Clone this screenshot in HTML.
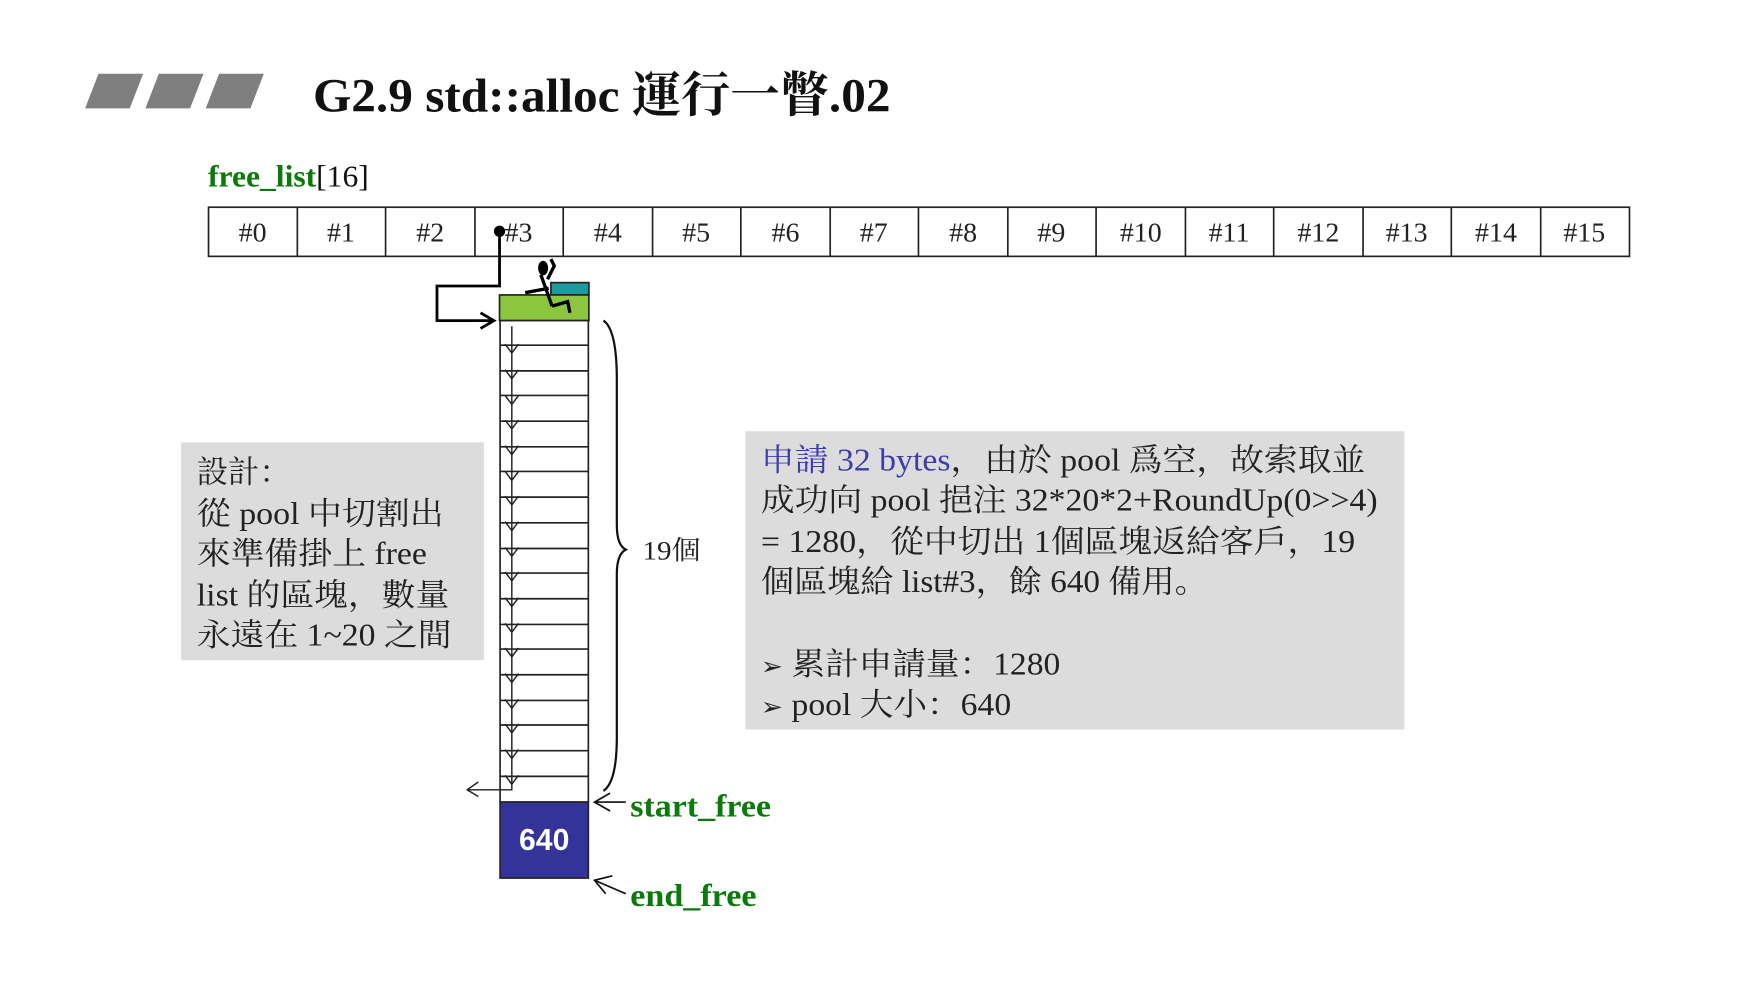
<!DOCTYPE html>
<html><head><meta charset="utf-8"><style>
html,body{margin:0;padding:0;background:#fff;width:1752px;height:992px;overflow:hidden}
svg{display:block}
text{font-family:"Liberation Serif","Noto Serif CJK SC","Noto Sans CJK TC",serif}
</style></head><body>
<svg width="1752" height="992" viewBox="0 0 1568 888" xmlns="http://www.w3.org/2000/svg">
<rect width="1568" height="888" fill="#fff"/>
<g fill="#7f7f7f">
<polygon points="88,66 128,66 116,97 76,97"/>
<polygon points="142,66 182,66 170,97 130,97"/>
<polygon points="196,66 236,66 224,97 184,97"/>
</g>
<text x="280" y="100" font-size="43" font-weight="bold" fill="#111" textLength="517" lengthAdjust="spacingAndGlyphs">G2.9 std::alloc 運行一瞥.02</text>
<text x="186" y="167" font-size="27" fill="#111" textLength="144" lengthAdjust="spacingAndGlyphs"><tspan fill="#0b7a0b" font-weight="bold">free_list</tspan>[16]</text>
<rect x="186.5" y="185.5" width="1272" height="44" fill="none" stroke="#222" stroke-width="1.5"/>
<g stroke="#222" stroke-width="1.5">
<line x1="266" y1="185" x2="266" y2="229"/><line x1="345" y1="185" x2="345" y2="229"/><line x1="425" y1="185" x2="425" y2="229"/><line x1="504" y1="185" x2="504" y2="229"/><line x1="584" y1="185" x2="584" y2="229"/><line x1="663" y1="185" x2="663" y2="229"/><line x1="743" y1="185" x2="743" y2="229"/><line x1="822" y1="185" x2="822" y2="229"/><line x1="902" y1="185" x2="902" y2="229"/><line x1="981" y1="185" x2="981" y2="229"/><line x1="1061" y1="185" x2="1061" y2="229"/><line x1="1140" y1="185" x2="1140" y2="229"/><line x1="1220" y1="185" x2="1220" y2="229"/><line x1="1299" y1="185" x2="1299" y2="229"/><line x1="1379" y1="185" x2="1379" y2="229"/>
</g>
<g font-size="25" fill="#222" text-anchor="middle">
<text x="226" y="216">#0</text><text x="305" y="216">#1</text><text x="385" y="216">#2</text><text x="464" y="216">#3</text><text x="544" y="216">#4</text><text x="623" y="216">#5</text><text x="703" y="216">#6</text><text x="782" y="216">#7</text><text x="862" y="216">#8</text><text x="941" y="216">#9</text><text x="1021" y="216">#10</text><text x="1100" y="216">#11</text><text x="1180" y="216">#12</text><text x="1259" y="216">#13</text><text x="1339" y="216">#14</text><text x="1418" y="216">#15</text>
</g>
<circle cx="447" cy="207" r="5" fill="#000"/>
<polyline points="447,207 447,256 391,256 391,287 441,287" fill="none" stroke="#000" stroke-width="2.5"/>
<polyline points="430,280 442,287 430,294" fill="none" stroke="#000" stroke-width="2.5"/>
<rect x="493" y="253" width="34" height="11" fill="#1d9aa0" stroke="#222" stroke-width="1.5"/>
<rect x="447" y="264" width="80" height="23" fill="#8cc63f" stroke="#222" stroke-width="1.5"/>
<g stroke="#000" stroke-width="3" fill="none"><ellipse cx="486" cy="240" rx="3" ry="5" fill="#000"/><path d="M484 246 L494 274 M491 258 L470 262 M490 250 L496 238 L493 232 M494 274 L508 270 L510 280"/></g>
<rect x="447.5" y="287" width="79" height="431" fill="#fff" stroke="#222" stroke-width="1.5"/>
<g stroke="#222" stroke-width="1.5">
<line x1="447" y1="309" x2="527" y2="309"/><line x1="447" y1="332" x2="527" y2="332"/><line x1="447" y1="354" x2="527" y2="354"/><line x1="447" y1="377" x2="527" y2="377"/><line x1="447" y1="400" x2="527" y2="400"/><line x1="447" y1="422" x2="527" y2="422"/><line x1="447" y1="445" x2="527" y2="445"/><line x1="447" y1="468" x2="527" y2="468"/><line x1="447" y1="491" x2="527" y2="491"/><line x1="447" y1="513" x2="527" y2="513"/><line x1="447" y1="536" x2="527" y2="536"/><line x1="447" y1="559" x2="527" y2="559"/><line x1="447" y1="581" x2="527" y2="581"/><line x1="447" y1="604" x2="527" y2="604"/><line x1="447" y1="627" x2="527" y2="627"/><line x1="447" y1="649" x2="527" y2="649"/><line x1="447" y1="672" x2="527" y2="672"/><line x1="447" y1="695" x2="527" y2="695"/>
</g>
<g stroke="#222" stroke-width="1.3" fill="none">
<path d="M458 292 V316 M452 308 L458 316 L464 308"/>
<path d="M458 315 V339 M452 331 L458 339 L464 331"/>
<path d="M458 338 V362 M452 354 L458 362 L464 354"/>
<path d="M458 360 V384 M452 376 L458 384 L464 376"/>
<path d="M458 383 V407 M452 399 L458 407 L464 399"/>
<path d="M458 406 V430 M452 422 L458 430 L464 422"/>
<path d="M458 428 V452 M452 444 L458 452 L464 444"/>
<path d="M458 451 V475 M452 467 L458 475 L464 467"/>
<path d="M458 474 V498 M452 490 L458 498 L464 490"/>
<path d="M458 496 V520 M452 512 L458 520 L464 512"/>
<path d="M458 519 V543 M452 535 L458 543 L464 535"/>
<path d="M458 542 V566 M452 558 L458 566 L464 558"/>
<path d="M458 564 V588 M452 580 L458 588 L464 580"/>
<path d="M458 587 V611 M452 603 L458 611 L464 603"/>
<path d="M458 610 V634 M452 626 L458 634 L464 626"/>
<path d="M458 632 V656 M452 648 L458 656 L464 648"/>
<path d="M458 655 V679 M452 671 L458 679 L464 671"/>
<path d="M458 678 V702 M452 694 L458 702 L464 694"/>
<path d="M458 702 V707 H418 M428 700 L418 707 L428 713"/>
</g>
<path d="M540 287 Q552 295 552 340 L552 470 Q552 488 560 492 Q552 496 552 514 L552 660 Q552 700 540 708" fill="none" stroke="#111" stroke-width="2"/>
<text x="575" y="501" font-size="24" fill="#222" textLength="52" lengthAdjust="spacingAndGlyphs">19個</text>
<rect x="447.5" y="718" width="79" height="68" fill="#333399" stroke="#222" stroke-width="1.5"/>
<text x="487" y="761" font-size="27" font-weight="bold" fill="#fff" text-anchor="middle" style="font-family:'Liberation Sans',sans-serif">640</text>
<g stroke="#111" stroke-width="1.5" fill="none">
<path d="M532 718 H560 M546 710 L532 718 L546 726"/>
<path d="M532 788 L560 800 M548 784 L532 788 L542 800"/>
</g>
<text x="564" y="731" font-size="28" font-weight="bold" fill="#0b7a0b" textLength="126" lengthAdjust="spacingAndGlyphs">start_free</text>
<text x="564" y="811" font-size="28" font-weight="bold" fill="#0b7a0b" textLength="113" lengthAdjust="spacingAndGlyphs">end_free</text>
<rect x="162" y="396" width="271" height="195" fill="#dcdcdc"/>
<g font-size="28" fill="#222">
<text x="176" y="432">設計：</text>
<text x="176" y="469" textLength="221" lengthAdjust="spacingAndGlyphs">從 pool 中切割出</text>
<text x="176" y="505" textLength="206" lengthAdjust="spacingAndGlyphs">來準備掛上 free</text>
<text x="176" y="542" textLength="226" lengthAdjust="spacingAndGlyphs">list 的區塊，數量</text>
<text x="176" y="578" textLength="228" lengthAdjust="spacingAndGlyphs">永遠在 1~20 之間</text>
</g>
<rect x="667" y="386" width="590" height="267" fill="#dcdcdc"/>
<g font-size="28" fill="#222">
<text x="681" y="421" textLength="541" lengthAdjust="spacingAndGlyphs"><tspan fill="#3d3daa">申請 32 bytes</tspan>，由於 pool 爲空，故索取並</text>
<text x="681" y="457" textLength="552" lengthAdjust="spacingAndGlyphs">成功向 pool 挹注 32*20*2+RoundUp(0&gt;&gt;4)</text>
<text x="681" y="494" textLength="532" lengthAdjust="spacingAndGlyphs">= 1280，從中切出 1個區塊返給客戶，19</text>
<text x="681" y="530" textLength="400" lengthAdjust="spacingAndGlyphs">個區塊給 list#3，餘 640 備用。</text>
<text x="681" y="604" textLength="268" lengthAdjust="spacingAndGlyphs"><tspan font-size="22">➢</tspan> 累計申請量：1280</text>
<text x="681" y="640" textLength="224" lengthAdjust="spacingAndGlyphs"><tspan font-size="22">➢</tspan> pool 大小：640</text>
</g>
</svg>
</body></html>
